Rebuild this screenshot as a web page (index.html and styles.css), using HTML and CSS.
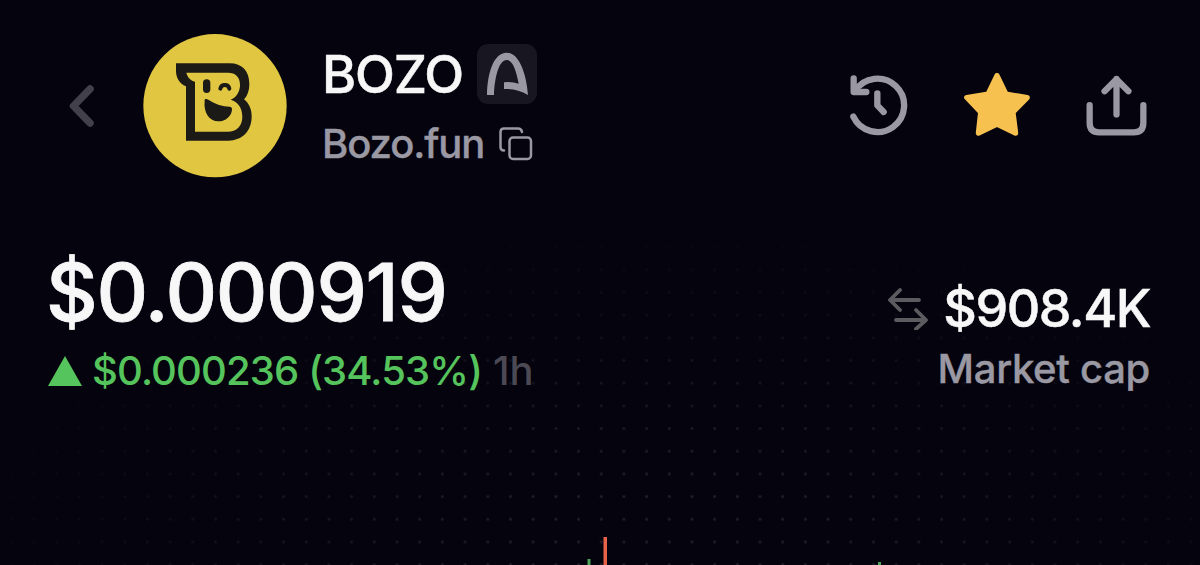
FILE: index.html
```html
<!DOCTYPE html>
<html lang="en">

<head>
  <meta charset="UTF-8">
  <meta name="viewport" content="width=device-width, initial-scale=1.0">
  <title>BOZO</title>
  <link rel="stylesheet" href="styles.css">
</head>

<body>

  <header class="header">
    <svg class="back" viewBox="0 0 26 44">
      <path d="M21 5 L4.500 22 L21 39" />
    </svg>

    <svg class="avatar" viewBox="0 0 432 432">
      <circle cx="216" cy="215" r="215" fill="#e0c641" />
      <path fill="#1c1a17" fill-rule="evenodd" d="M99 88 H260 C298 88 319 112 319 149 C319 170 313 185 303 196 C318 208 326 225 326 247 C326 291 298 320 256 320 H129 V157 C109 148 99 131 99 110 Z
        M130 116 C133 129 142 139 156 143 V293 H254 C281 293 298 276 298 248 C298 221 285 203 263 197 C280 191 291 173 291 153 C291 129 278 116 255 116 Z" />
      <rect x="180" y="136" width="22" height="41" rx="11" fill="#1c1a17" />
      <path d="M232 164 C235 150 256 149 259 164" fill="none" stroke="#1c1a17" stroke-width="12" stroke-linecap="round" />
      <path fill="#1c1a17" d="M185 201 C183 195 190 194 196 197 C217 211 239 217 260 218 Q268 219 267 227 C265 247 248 262 226 262 C199 262 181 236 185 201 Z" />
    </svg>

    <div class="names">
      <div class="title">
        <h1>BOZO</h1>
        <svg class="badge" viewBox="0 0 180 180">
          <path d="M30 153 C31 87 50 26 89 26 C128 26 149 94 153 153 Q119 133 81 135 V115 Q103 112 125 119 C118 82 108 48 89 48 C66 48 53 99 51 153 Z" />
        </svg>
      </div>
      <div class="subtitle">
        <span>Bozo.fun</span>
        <svg class="copy" viewBox="0 0 34 34">
          <rect x="10.500" y="10.500" width="21.500" height="21.500" rx="3.500" />
          <path d="M5 23.500 C2.500 23.500 1.500 22 1.500 20 V5 Q1.500 1.500 5 1.500 H19 Q22.500 1.500 23 5" />
        </svg>
      </div>
    </div>

    <div class="actions">
      <svg class="history" viewBox="0 0 180 183">
        <path d="M10 125 A80 80 0 1 0 15 48" />
        <path d="M11 10 V51 H49" />
        <path d="M82 55 V91 L101 111" />
      </svg>
      <svg class="star" viewBox="0 0 198 190">
        <path d="M99 8 L126 64 L190 74 L147 118 L155 181 L99 154 L43 181 L50 118 L8 74 L72 64 Z" />
      </svg>
      <svg class="share" viewBox="0 0 182 184">
        <path d="M10 91 V144 Q10 173 39 173 H143 Q172 173 172 144 V91" />
        <path d="M91 119 V12 M55 49 L91 13 L127 49" />
      </svg>
    </div>
  </header>

  <main class="summary">
    <section>
      <div class="price">$0.000919</div>
      <div class="change">
        <svg class="up" viewBox="0 0 34 30">
          <path d="M17 0 L34 30 H0 Z" />
        </svg>
        <span class="amount">$0.000236 (34.53%)</span>
        <span class="period">1h</span>
      </div>
    </section>

    <section class="market">
      <div class="cap">
        <svg class="swap" viewBox="0 0 42 42">
          <path d="M32 12 H3 M13 2 L3 12 L13 22 M9 32 H38 M29 22 L39 32 L29 41" />
        </svg>
        <span>$908.4K</span>
      </div>
      <div class="label">Market cap</div>
    </section>
  </main>

  <svg class="chart" viewBox="0 0 1200 30">
    <rect class="gain" x="587.500" y="24" width="3" height="6" />
    <rect class="loss" x="603.500" y="2" width="3.500" height="28" />
    <rect class="gain" x="878" y="27" width="3" height="3" />
  </svg>

</body>

</html>
```
FILE: styles.css
```css
* {
  margin: 0;
  padding: 0;
  box-sizing: border-box;

  --gray: #9998a3;
  --green: #56c45c;
}

body {
  background-color: #05030e;
  font-family: Inter, sans-serif;
  font-weight: 500;
  color: #f7f7f8;
  height: 565px;
  overflow: hidden;
  display: flex;
  flex-direction: column;
}

svg {
  display: block;
  flex-shrink: 0;
}

.header {
  display: flex;
  align-items: flex-start;
  padding: 34px 53px 0 69px;
  height: 234px;
}

.back {
  width: 26px;
  height: 44px;
  margin: 50px 48px 0 0;
  fill: none;
  stroke: #42414b;
  stroke-width: 7.5;
  stroke-linecap: round;
  stroke-linejoin: round;
}

.avatar {
  width: 144px;
  height: 144px;
}

.names {
  margin: 10px 0 0 35px;
}

.title {
  display: flex;
  align-items: center;
  height: 60px;
}

.title h1 {
  width: 155px;
  font-size: 52px;
  font-weight: 500;
  letter-spacing: -1.1px;
  line-height: 60px;
  padding-top: 1px;
  -webkit-text-stroke: 0.5px;
}

.badge {
  width: 60px;
  height: 60px;
  border-radius: 11px;
  background-color: #171621;
  fill: var(--gray);
}

.subtitle {
  display: flex;
  align-items: center;
  margin-top: 15px;
  color: var(--gray);
  font-size: 40px;
  line-height: 48px;
}

.subtitle span {
  width: 177px;
  padding-top: 1px;
  letter-spacing: -1.1px;
  -webkit-text-stroke: 0.4px;
}

.copy {
  width: 34px;
  height: 34px;
  fill: none;
  stroke: var(--gray);
  stroke-width: 2.5;
  stroke-linecap: round;
}

.actions {
  display: flex;
  align-items: flex-start;
  margin-left: auto;
  padding-top: 41px;
  fill: none;
  stroke: var(--gray);
  stroke-width: 19;
  stroke-linecap: round;
  stroke-linejoin: round;
}

.history {
  width: 60px;
  height: 61px;
}

.star {
  width: 66px;
  height: 63px;
  margin: -2px 56px 0 54px;
  fill: #f7c150;
  stroke: #f7c150;
  stroke-width: 16;
}

.share {
  width: 61px;
  height: 61px;
}

.summary {
  display: flex;
  justify-content: space-between;
  padding: 10px 50px 0 48px;
  flex: 1;
  background-image:
    radial-gradient(ellipse 720px 330px at 660px 310px, transparent 20%, #05030e 100%),
    radial-gradient(circle, #23222c 0, #1d1c26 1px, transparent 2px);
  background-size: 100% 100%, 22.7px 22.7px;
  background-position: 0 0, 0 1.700px;
}

.price {
  font-size: 80px;
  line-height: 96px;
  letter-spacing: -1.3px;
  margin-left: -2px;
  -webkit-text-stroke: 0.8px;
}

.change {
  display: flex;
  align-items: center;
  margin-top: 7px;
  font-size: 40px;
  line-height: 48px;
}

.up {
  width: 34px;
  height: 30px;
  margin-right: 10px;
  fill: var(--green);
}

.amount {
  width: 401px;
  color: var(--green);
  letter-spacing: -0.85px;
}

.period {
  color: #4b4a54;
}

.market {
  padding-top: 35px;
}

.cap {
  display: flex;
  align-items: center;
  justify-content: flex-end;
  font-size: 52px;
  line-height: 60px;
  letter-spacing: -1.5px;
  -webkit-text-stroke: 0.5px;
}

.swap {
  width: 42px;
  height: 42px;
  margin-right: 14px;
  fill: none;
  stroke: #5c5b5f;
  stroke-width: 3.8;
  stroke-linecap: round;
  stroke-linejoin: round;
}

.label {
  margin-top: 6px;
  color: var(--gray);
  font-size: 40px;
  letter-spacing: -0.3px;
  line-height: 48px;
  text-align: right;
  -webkit-text-stroke: 0.4px;
}

.chart {
  width: 1200px;
  height: 30px;
  margin-top: -30px;
}

.gain {
  fill: #4fa45b;
}

.loss {
  fill: #e8624a;
}
```
